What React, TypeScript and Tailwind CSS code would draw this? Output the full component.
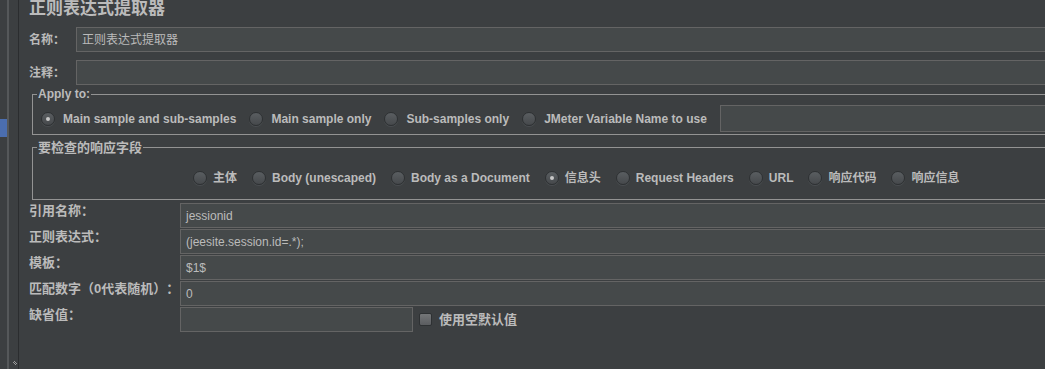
import React from 'react';

const applyOptions = [
  { label: 'Main sample and sub-samples', checked: true },
  { label: 'Main sample only' },
  { label: 'Sub-samples only' },
  { label: 'JMeter Variable Name to use' },
];

const fieldOptions = [
  { label: '主体' },
  { label: 'Body (unescaped)' },
  { label: 'Body as a Document' },
  { label: '信息头', checked: true },
  { label: 'Request Headers' },
  { label: 'URL' },
  { label: '响应代码' },
  { label: '响应信息' },
];

const fields: { label: React.ReactNode; key: string; value: string }[] = [
  { key: 'ref', label: '引用名称：', value: 'jessionid' },
  { key: 'regex', label: '正则表达式：', value: '(jeesite.session.id=.*);' },
  { key: 'tpl', label: '模板：', value: '$1$' },
  {
    key: 'match',
    label: (
      <>
        匹配数字<span className="inline-block w-[13px] text-right">（</span>0代表随机
        <span className="inline-block w-[13px] text-left">）</span>
        <span className="inline-block w-[13px] text-center">：</span>
      </>
    ),
    value: '0',
  },
];

function Radio({ checked }: { checked?: boolean }) {
  return (
    <span className="flex h-[14px] w-[14px] shrink-0 items-center justify-center rounded-full border border-[#2e3133] bg-linear-to-b from-[#5a5e61] to-[#46494c] shadow-[0_1px_0_#4a4d50]">
      {checked && <span className="h-[4px] w-[4px] rounded-full bg-[#c8c8c8]" />}
    </span>
  );
}

function Input({ value, className = '' }: { value?: string; className?: string }) {
  return (
    <div className={`flex h-[25px] items-center border border-[#646464] bg-[#45494a] px-[5px] text-[12px] text-[#bbbbbb] ${className}`}>
      {value}
    </div>
  );
}

export default function App() {
  return (
    <div className="flex h-[369px] w-[1045px] overflow-hidden bg-[#3c3f41] font-['Liberation_Sans','Noto_Sans_CJK_SC',sans-serif] text-[#bbbbbb]">
      {/* left split pane edge */}
      <div className="flex w-[19px] shrink-0">
        <div className="w-[7px]">
          <div className="mt-[119px] h-[18px] bg-[#4b6eaf]" />
        </div>
        <div className="w-[2px] bg-[#55585a]" />
        <div className="flex w-[9px] flex-col justify-end pb-[1px]">
          <svg width="9" height="6" viewBox="0 0 9 6" className="mb-[1px]">
            <rect x="5" y="0" width="1" height="1" fill="#9a9a9a" />
            <rect x="4" y="1" width="1" height="1" fill="#9a9a9a" />
            <rect x="6" y="1" width="1" height="1" fill="#9a9a9a" />
            <rect x="5" y="2" width="1" height="1" fill="#9a9a9a" />
            <rect x="7" y="2" width="1" height="1" fill="#9a9a9a" />
            <rect x="6" y="3" width="1" height="1" fill="#9a9a9a" />
          </svg>
        </div>
        <div className="w-[1px] bg-[#2b2d2f]" />
      </div>

      <div className="flex min-w-0 flex-1 flex-col overflow-hidden pl-[10px]">
        <div className="-mt-[1px] h-[28px] text-[17px] font-bold leading-[20px] text-[#bbbbbb]">正则表达式提取器</div>

        <div className="flex items-center">
          <span className="w-[47px] text-[12px] font-bold">名称：</span>
          <Input value="正则表达式提取器" className="-mr-[2px] flex-1" />
        </div>
        <div className="mt-[8px] flex items-center">
          <span className="w-[47px] text-[12px] font-bold">注释：</span>
          <Input className="-mr-[2px] flex-1" />
        </div>

        <fieldset className="-mr-[4px] ml-[3px] mt-[2px] border border-[#939393] px-0 pb-[2px] pt-[4px]">
          <legend className="ml-[4px] px-[1px] text-[12px] font-bold leading-[14px]">Apply to:</legend>
          <div className="flex items-center pl-[8px]">
            {applyOptions.map((o) => (
              <div key={o.label} className="mr-[13px] flex items-center gap-[8px] last:mr-[8px]">
                <Radio checked={o.checked} />
                <span className="whitespace-nowrap text-[12px] font-bold">{o.label}</span>
              </div>
            ))}
            <div className="h-[27px] flex-1 border border-[#646464] bg-[#45494a]" />
          </div>
        </fieldset>

        <fieldset className="-mr-[80px] ml-[3px] mt-[5px] border border-[#939393] px-0 pb-[12px] pt-[14px]">
          <legend className="ml-[4px] px-[1px] text-[13px] font-bold leading-[15px]">要检查的响应字段</legend>
          <div className="flex items-center pl-[160px]">
            {fieldOptions.map((o) => (
              <div key={o.label} className="mr-[15px] flex items-center gap-[6px]">
                <Radio checked={o.checked} />
                <span className="whitespace-nowrap text-[12px] font-bold">{o.label}</span>
              </div>
            ))}
          </div>
        </fieldset>

        <div className="mt-[3px] flex flex-col gap-[1px]">
          {fields.map((f) => (
            <div key={f.key} className="flex">
              <span className="w-[151px] whitespace-nowrap text-[13px] font-bold leading-[16px]">{f.label}</span>
              <Input value={f.value} className="-mr-[2px] flex-1" />
            </div>
          ))}
          <div className="flex">
            <span className="w-[151px] text-[13px] font-bold leading-[16px]">缺省值：</span>
            <Input className="w-[233px]" />
            <div className="ml-[6px] flex h-[25px] items-center gap-[7px]">
              <span className="h-[13px] w-[13px] rounded-[2px] border border-[#2e3133] bg-linear-to-b from-[#747678] to-[#5b5d60]" />
              <span className="text-[13px] font-bold">使用空默认值</span>
            </div>
          </div>
        </div>
      </div>
    </div>
  );
}
